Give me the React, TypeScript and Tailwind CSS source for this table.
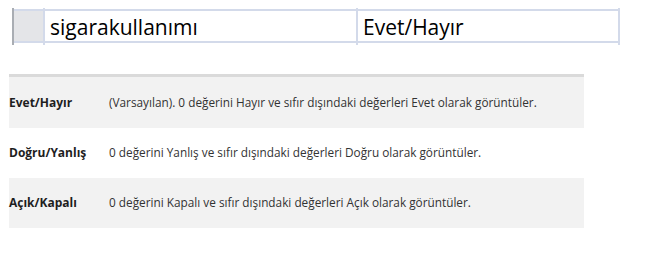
import React from "react";

const rows = [
  {
    label: "Evet/Hayır",
    text: "(Varsayılan). 0 değerini Hayır ve sıfır dışındaki değerleri Evet olarak görüntüler.",
    shaded: true,
  },
  {
    label: "Doğru/Yanlış",
    text: "0 değerini Yanlış ve sıfır dışındaki değerleri Doğru olarak görüntüler.",
    shaded: false,
  },
  {
    label: "Açık/Kapalı",
    text: "0 değerini Kapalı ve sıfır dışındaki değerleri Açık olarak görüntüler.",
    shaded: true,
  },
];

function GridCell({ width, text }: { width: string; text?: string }) {
  return (
    <div className={`flex flex-col h-full ${width}`}>
      <div className="h-[1px]" />
      <div className="h-[2px] bg-[#d3daea]" />
      <div className="flex-1 flex items-center pl-[5px] pt-[3px] text-[21px] text-black leading-none">
        {text}
      </div>
      <div className="h-[2px] bg-[#d3daea]" />
      <div className="h-[2px]" />
    </div>
  );
}

export default function App() {
  return (
    <div className="w-[660px] h-[255px] bg-white overflow-hidden" style={{ fontFamily: '"Open Sans", "Noto Sans", sans-serif' }}>
      {/* datasheet row */}
      <div className="flex h-[37px] mt-[8px] ml-[12px]">
        <div className="w-[2px] h-full bg-[#a9adb3]" />
        <div className="flex flex-col h-full w-[29px]">
          <div className="h-[1px]" />
          <div className="h-[2px] bg-[#d3daea]" />
          <div className="flex-1 bg-[#e4e5e8]" />
          <div className="h-[2px] bg-[#d3daea]" />
          <div className="h-[2px]" />
        </div>
        <div className="w-[2px] h-full bg-[#d3daea]" />
        <GridCell width="w-[311px]" text="sigarakullanımı" />
        <div className="w-[2px] h-full bg-[#d3daea]" />
        <GridCell width="w-[260px]" text="Evet/Hayır" />
        <div className="w-[2px] h-full bg-[#d3daea]" />
      </div>

      {/* format table */}
      <div className="mt-[29px] ml-[9px] w-[575px] border-t-[3px] border-[#dadada]">
        {rows.map((r, i) => (
          <div
            key={r.label}
            className={`flex items-center ${i === 0 ? "h-[51px]" : "h-[50px]"} ${r.shaded ? "bg-[#f2f2f2]" : "bg-white"}`}
          >
            <div className="w-[100px] shrink-0 text-[12px] font-bold text-[#1e1e1e]">{r.label}</div>
            <div className="text-[11.8px] text-[#333333]">{r.text}</div>
          </div>
        ))}
      </div>
    </div>
  );
}
